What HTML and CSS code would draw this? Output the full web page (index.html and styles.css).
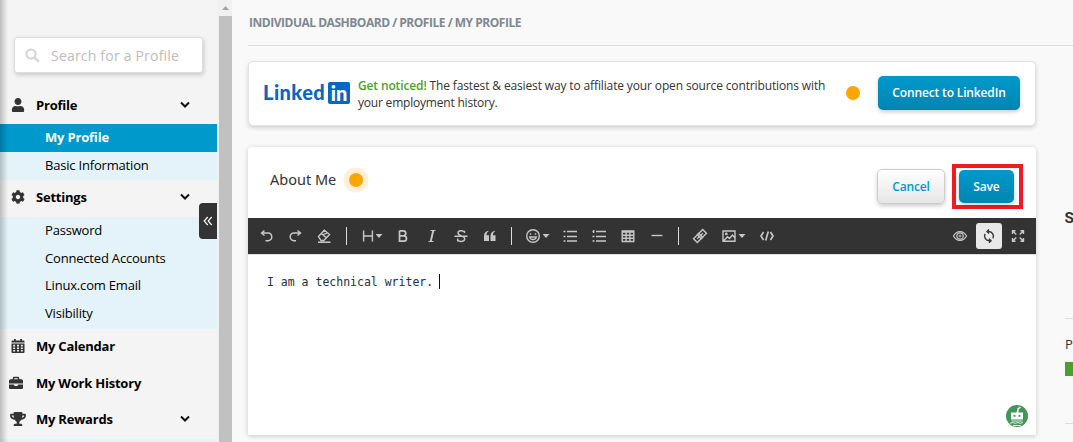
FILE: index.html
```html
<!DOCTYPE html>
<html lang="en">
<head>
<meta charset="utf-8">
<title>My Profile</title>
<link rel="stylesheet" href="styles.css">
</head>
<body>
<div class="app">
  <aside class="sidebar">
    <label class="search">
      <svg class="search-icon" viewBox="0 0 16 16"><circle cx="6.4" cy="6.4" r="4.9" fill="none" stroke="#d6d6d6" stroke-width="2.2"/><path d="M10 10l4.6 4.6" stroke="#d6d6d6" stroke-width="2.6"/></svg>
      <span>Search for a Profile</span>
    </label>
    <nav class="nav">
      <div class="group tall"><svg class="nav-icon" viewBox="-32 0 512 512"><path d="M224 256c70.700 0 128-57.300 128-128S294.700 0 224 0 96 57.300 96 128s57.300 128 128 128zm89.600 32h-16.700c-22.200 10.200-46.900 16-72.900 16s-50.600-5.800-72.900-16h-16.700C60.200 288 0 348.200 0 422.400V464c0 26.500 21.500 48 48 48h352c26.500 0 48-21.500 48-48v-41.600c0-74.200-60.200-134.400-134.400-134.400z"/></svg><b>Profile</b><svg class="chevron" viewBox="0 0 10 8"><path d="M1 1.500l4 4 4-4"/></svg></div>
      <div class="item active">My Profile</div>
      <div class="item">Basic Information</div>
      <div class="group tall raised"><svg class="nav-icon" viewBox="0 0 512 512"><path d="M487.400 315.700l-42.600-24.600c4.300-23.200 4.300-47 0-70.200l42.600-24.600c4.900-2.800 7.100-8.600 5.500-14-11.100-35.600-30-67.800-54.700-94.600-3.800-4.100-10-5.100-14.800-2.300L380.800 110c-17.900-15.400-38.500-27.300-60.800-35.100V25.800c0-5.600-3.900-10.500-9.400-11.700-36.700-8.200-74.300-7.800-109.200 0-5.500 1.200-9.400 6.100-9.400 11.700V75c-22.200 7.900-42.800 19.800-60.800 35.100L88.700 85.500c-4.900-2.800-11-1.900-14.800 2.300-24.700 26.700-43.600 58.900-54.700 94.600-1.700 5.400.6 11.200 5.500 14L67.300 221c-4.300 23.200-4.300 47 0 70.200l-42.600 24.600c-4.900 2.800-7.100 8.600-5.500 14 11.100 35.600 30 67.800 54.700 94.600 3.800 4.100 10 5.100 14.800 2.300l42.600-24.600c17.900 15.400 38.500 27.300 60.800 35.100v49.200c0 5.600 3.900 10.500 9.400 11.700 36.700 8.200 74.300 7.800 109.200 0 5.500-1.200 9.400-6.100 9.400-11.700v-49.200c22.200-7.900 42.800-19.800 60.800-35.100l42.600 24.600c4.900 2.800 11 1.900 14.800-2.300 24.700-26.700 43.600-58.900 54.700-94.600 1.500-5.500-.7-11.300-5.600-14.100zM256 336c-44.100 0-80-35.900-80-80s35.900-80 80-80 80 35.900 80 80-35.900 80-80 80z"/></svg><b>Settings</b><svg class="chevron" viewBox="0 0 10 8"><path d="M1 1.500l4 4 4-4"/></svg></div>
      <div class="item">Password</div>
      <div class="item">Connected Accounts</div>
      <div class="item tight">Linux.com Email</div>
      <div class="item tight">Visibility</div>
      <div class="group raised"><svg class="nav-icon" viewBox="0 0 14 14"><path fill-rule="evenodd" d="M.5 3.400V2.500q0-1 1-1H3V0h1.800v1.500h4.400V0H11v1.500h1.500q1 0 1 1v.9zM.5 4.400h13V13q0 1-1 1h-11q-1 0-1-1zM2.200 5.800v1.600h1.900V5.800zm3.800 0v1.600h2V5.800zm3.900 0v1.600h1.900V5.800zM2.200 8.500v1.500h1.900V8.500zm3.800 0v1.500h2V8.500zm3.900 0v1.500h1.900V8.500zM2.200 11.100v1.500h1.900v-1.500zm3.800 0v1.500h2v-1.500zm3.900 0v1.500h1.900v-1.500z"/></svg><b>My Calendar</b></div>
      <div class="group raised"><svg class="nav-icon briefcase" viewBox="0 0 14 14"><path fill-rule="evenodd" d="M3.700 3.200V2.100Q3.700.8 5 .8h4q1.300 0 1.300 1.300v1.100h2.200Q14 3.200 14 4.700v2.900H0V4.700q0-1.500 1.500-1.500zm1.500 0h3.600v-.9H5.200zM0 8.500h5.200v.8q0 .6.600.6h2.400q.6 0 .6-.6v-.8H14v3.200q0 1.300-1.300 1.300H1.300Q0 13 0 11.700z"/></svg><b>My Work History</b></div>
      <div class="group raised last"><svg class="nav-icon trophy" viewBox="0 0 576 512"><path d="M552 64H448V24c0-13.300-10.700-24-24-24H152c-13.300 0-24 10.700-24 24v40H24C10.700 64 0 74.700 0 88v56c0 35.700 22.500 72.400 61.900 100.700 31.500 22.700 69.800 37.100 110 41.700C203.300 338.500 240 360 240 360v72h-48c-35.300 0-64 20.700-64 56v12c0 6.600 5.400 12 12 12h296c6.600 0 12-5.400 12-12v-12c0-35.300-28.700-56-64-56h-48v-72s36.700-21.500 68.100-73.600c40.300-4.600 78.600-19 110-41.700 39.300-28.300 61.900-65 61.900-100.700V88c0-13.300-10.700-24-24-24zM99.300 192.800C74.900 175.200 64 155.600 64 144v-16h64.200c1 32.600 5.800 61.200 12.800 86.200-15.100-5.200-29.200-12.400-41.700-21.400zM512 144c0 16.100-17.700 36.100-35.300 48.800-12.500 9-26.700 16.200-41.800 21.400 7-25 11.800-53.600 12.800-86.200H512v16z"/></svg><b>My Rewards</b><svg class="chevron" viewBox="0 0 10 8"><path d="M1 1.500l4 4 4-4"/></svg></div>
      <div class="item"></div>
    </nav>
    <div class="collapse"><svg viewBox="0 0 10 10"><path d="M4.700 1L1.200 5l3.500 4M8.700 1L5.200 5l3.500 4"/></svg></div>
  </aside>
  <div class="scrollbar"><i></i></div>
  <div class="page">
  <header class="crumbs">INDIVIDUAL DASHBOARD / PROFILE / MY PROFILE</header>
  <div class="columns">
  <main class="main">
    <section class="promo">
      <div class="linkedin"><span>Linked</span><b>in</b></div>
      <p class="notice"><em>Get noticed!</em> The fastest &amp; easiest way to affiliate your open source contributions with<br><span class="line2">your employment history.</span></p>
      <i class="dot"></i>
      <button class="btn connect">Connect to LinkedIn</button>
    </section>
    <section class="about">
      <div class="about-head">
        <h2>About Me</h2><i class="dot halo"></i>
        <button class="btn cancel">Cancel</button>
        <div class="highlight"><button class="btn save">Save</button></div>
      </div>
      <div class="toolbar">
        <span class="tool first"><svg viewBox="0 0 16 16"><path d="M5.500 2.500L2.500 5l3 2.500M3 5h6.500a3.900 3.900 0 010 7.700H6.500"/></svg></span>
        <span class="tool first"><svg viewBox="0 0 16 16"><path d="M10.500 2.500l3 2.500-3 2.500M13 5H6.500a3.900 3.900 0 000 7.700H9"/></svg></span>
        <span class="tool first"><svg viewBox="0 0 16 16"><path d="M2.500 8.500l5.800-6.200 5.200 4.200-5.700 6H5zM5.300 5.500l5.300 4.500M7.300 6.300l3.500-1M2 14.300h12.500"/></svg></span>
        <span class="sep wide"></span>
        <span class="tool heading"><svg viewBox="0 0 16 16"><path d="M3.600 2.500v11M12.400 2.500v11M3.600 8h8.800"/></svg><i class="caret"></i></span>
        <span class="tool"><svg viewBox="0 0 16 16"><path stroke-width="1.700" d="M4.500 2.800v10.400h4.300a2.700 2.700 0 000-5.400H4.500M4.500 2.800h3.800a2.500 2.500 0 010 5"/></svg></span>
        <span class="tool"><svg viewBox="0 0 16 16"><path stroke-width="1.100" d="M6.500 2.500h5M4.500 13.500h5"/><path stroke-width="1.900" d="M9.300 2.500l-2.600 11"/></svg></span>
        <span class="tool"><svg viewBox="0 0 16 16"><path d="M11.500 5V2.700M11.500 4C9.500 2 5 2.300 5 5c0 3.300 6.700 2.300 6.700 5.700 0 3.200-5 3.500-7 1.300m0-1.500v3M1.500 8.300h13"/></svg></span>
        <span class="tool"><svg class="solid" viewBox="0 0 16 16"><path d="M6.700 3.200C5 4 4.500 5.100 4.500 7.300H7V13H2V8C2 5 3.600 3.300 6.200 2.700zM13.200 3.200c-1.700.8-2.200 1.900-2.200 4.100h2.500V13h-5V8c0-3 1.600-4.700 4.200-5.300z"/></svg></span>
        <span class="sep"></span>
        <span class="tool emoji"><svg viewBox="0 0 16 16"><circle cx="8" cy="8" r="6.300"/><path d="M5.500 5.200v1.600M10.500 5.200v1.600M4.700 9h6.600c-.4 3.300-6.200 3.300-6.600 0z"/></svg><i class="caret"></i></span>
        <span class="tool"><svg viewBox="0 0 16 16"><path d="M1.500 3.500h2M5 3.500h10M1.500 8.500h2M5 8.500h10M1.500 13h2M5 13h10"/></svg></span>
        <span class="tool"><svg viewBox="0 0 16 16"><path d="M1.500 3.500h1.200M5 3.500h10M1.500 8.500h2M5 8.500h10M1.500 13h2M5 13h10M2.700 2v3"/></svg></span>
        <span class="tool"><svg viewBox="0 0 16 16"><path d="M2.200 3h11.600v10.500H2.200zM2 4h12M2 7.200h12M2 10.300h12M6.100 4v9.500M9.900 4v9.500"/></svg></span>
        <span class="tool"><svg viewBox="0 0 16 16"><path d="M2.500 7.500h11"/></svg></span>
        <span class="sep"></span>
        <span class="tool link"><svg viewBox="0 0 16 16"><g transform="rotate(-45 8 8)"><rect x="1.500" y="5.300" width="7.500" height="5.400"/><rect x="7" y="5.300" width="7.500" height="5.400"/><path d="M4 8h8"/></g></svg></span>
        <span class="tool picture"><svg viewBox="0 0 16 16"><path d="M2 3h12v10.200H2zM3 12.500l3.500-3.700 2 1.700 3-3.500 2.500 3"/><circle cx="5.300" cy="5.900" r=".7"/></svg><i class="caret"></i></span>
        <span class="tool"><svg viewBox="0 0 16 16"><path stroke-width="1.700" d="M4.500 4L2 8l2.500 4M11.500 4L14 8l-2.500 4M9.300 3.500l-2.600 9"/></svg></span>
        <span class="spacer"></span>
        <span class="tool"><svg viewBox="0 0 16 16"><path stroke-width="1.200" d="M1.500 8c3-5.800 10-5.800 13 0-3 5.800-10 5.800-13 0z"/><circle cx="8" cy="8" r="3.200" stroke-width="1.200"/><circle cx="8" cy="8" r="1" stroke-width="1"/></svg></span>
        <span class="tool sync"><svg viewBox="0 0 16 16"><path d="M7 3.500h.8a4.700 4.700 0 014.100 6.900M9 12.700h-.8A4.700 4.700 0 014.100 5.800M8 1.500L6 3.500l2 2M8 10.700l2 2-2 2"/></svg></span>
        <span class="tool"><svg viewBox="0 0 16 16"><path d="M2.500 6V2.700h3M10.500 2.700h3V6M13.500 10v3.300h-3M5.500 13.300h-3V10M3 3.200l3.300 3.300M13 3.200L9.700 6.500M13 12.800L9.700 9.500M3 12.800l3.300-3.300"/></svg></span>
      </div>
      <div class="editor"><code>I am a technical writer.</code><i class="cursor"></i>
        <svg class="robot" viewBox="0 0 22 22"><circle cx="11" cy="11" r="11" fill="#43955a"/><path d="M10.500 7.500l1-4 2.500-2 .8 1.200-2 1.500-.5 3.300zM5 7.500h12v7H5z" fill="#fff"/><path d="M7.500 10h2v1.700h-2zM12.500 10h2v1.700h-2z" fill="#43955a"/><path d="M5.500 16h11M4 18.300l3-.8 2 .8 3-.8 2 .8 3-.8M7 20.500h8" stroke="#dcecdf" fill="none"/></svg>
      </div>
    </section>
  </main>
  <aside class="stats"><h3>S</h3><div class="metric"><span>P</span><i></i></div></aside>
  </div>
  </div>
</div>
</body>
</html>
```
FILE: styles.css
```css
* { box-sizing: border-box; }
body { margin: 0; overflow: hidden; background: #f9f9f9; font-family: "Open Sans", sans-serif; font-size: 13px; color: #333; }
.app { display: flex; height: 442px; overflow: hidden; }
.sidebar { position: relative; flex: 0 0 219px; padding-top: 37px; background: #f4f4f4; border-right: 2px solid #f1f1f1; }
.sidebar::after { content: ""; position: absolute; inset: 0 auto 0 0; width: 8px; background: linear-gradient(90deg, rgba(0,0,0,.22), rgba(0,0,0,0)); }
.search { display: flex; align-items: center; gap: 11px; width: 189px; height: 36px; margin-left: 14px; padding-left: 10px; background: #fff; border: 1px solid #ddd; border-radius: 3px; box-shadow: 1px 2px 4px rgba(0,0,0,.18); color: #bdbdbd; font-size: 14px; letter-spacing: .2px; }
.search-icon { width: 15px; height: 15px; }
.nav { padding-top: 14px; color: #000; }
.group { display: flex; align-items: center; height: 36.67px; padding: 0 27px 0 11px; }
.group.tall { height: 37px; padding-bottom: 2px; }
.group.raised { padding-bottom: 2px; }
.group.tall.raised, .group.last { padding-bottom: 3px; }
.group b { margin-left: 11px; font-weight: 700; letter-spacing: -.22px; }
.nav-icon { width: 14px; height: 14px; fill: #333; flex: none; }
.briefcase { margin-left: -2px; margin-right: 2px; }
.trophy { width: 16px; margin: 0 -1px; }
.chevron { width: 10px; height: 8px; margin-left: auto; fill: none; stroke: #111; stroke-width: 2; }
.item { height: 28px; padding-left: 45px; line-height: 27px; background: #e3f3f9; white-space: nowrap; letter-spacing: -.19px; }
.item.tight { line-height: 25px; }
.item.active { background: #0099cc; color: #fff; font-weight: 700; }
.collapse { position: absolute; top: 203px; right: 0; z-index: 2; display: grid; place-items: center; width: 18px; height: 36px; background: #333; border-radius: 4px 0 0 4px; }
.collapse svg { width: 10px; height: 10px; fill: none; stroke: #fff; stroke-width: 1.2; }
.scrollbar { flex: 0 0 13px; background: #c1c1c1; border-top: 16px solid #f1f1f1; }
.scrollbar i { display: block; width: 7px; height: 4px; margin: -10px auto 0; background: #a3a3a3; clip-path: polygon(50% 0, 100% 100%, 0 100%); }
.page { flex: 1; min-width: 0; margin-left: 16px; }
.columns { display: flex; }
.main { flex: 0 0 788px; }
.crumbs { height: 46px; padding: 14px 0 0 1px; border-bottom: 1px solid #ddd; color: #808890; font-size: 12px; font-weight: 700; line-height: 18px; letter-spacing: -.48px; white-space: nowrap; }
.promo { display: flex; align-items: center; width: 788px; height: 65px; margin-top: 15px; padding: 0 15px; background: #fff; border: 1px solid #e2e2e2; border-radius: 5px; box-shadow: 0 2px 4px rgba(0,0,0,.16); }
.linkedin { display: flex; align-items: center; width: 94px; color: #0a66c2; font: 900 20px/22px Lato, sans-serif; }
.linkedin span { width: 63px; letter-spacing: .45px; margin: -3px 0 0 -1px; }
.linkedin b { display: block; width: 22px; height: 22px; margin: -2px 0 0 2px; border-radius: 2px; background: #0a66c2; color: #fff; text-align: center; font-weight: 900; }
.notice { margin: 0; width: 488px; font-size: 12px; line-height: 17px; white-space: nowrap; letter-spacing: -.135px; }
.notice em { color: #4a9f2e; font-style: normal; font-weight: 600; }
.line2 { letter-spacing: -.2px; }
.dot { flex: none; width: 14px; height: 14px; margin-top: -2px; border-radius: 50%; background: #ffa500; }
.btn { display: flex; align-items: center; justify-content: center; padding: 0; border: 0; border-radius: 5px; font: 600 12px "Open Sans", sans-serif; letter-spacing: -.15px; white-space: nowrap; box-shadow: 0 2px 4px rgba(0,0,0,.2); }
.connect, .save { background: linear-gradient(#0099cc, #0085b2); color: #fff; }
.connect { width: 142px; height: 34px; margin: -2px 0 0 auto; }
.about { width: 788px; height: 288px; margin-top: 21px; background: #fff; border-radius: 4px 4px 0 0; box-shadow: 0 1px 5px rgba(0,0,0,.2); }
.about-head { display: flex; align-items: center; height: 71px; padding: 0 13px 0 22px; }
.about-head h2 { width: 67px; margin: 0 12px 7px 0; font: 400 14.500px/20px "Noto Sans", sans-serif; white-space: nowrap; }
.halo { margin: 0 0 6px; box-shadow: 0 0 0 5.500px #ffefd6; }
.cancel { width: 68px; height: 35px; margin-top: 7px; margin-left: auto; border: 1px solid #ccc; background: linear-gradient(#fff, #e6e6e6); color: #0099cc; }
.highlight { display: flex; align-items: center; width: 71px; height: 45px; margin: 7px 0 0 7px; padding-left: 3px; border: 4px solid #ed1c24; }
.save { width: 55px; height: 33px; }
.toolbar { display: flex; align-items: center; height: 37px; padding: 0 4px 0 4.500px; background: #333; border-bottom: 1px solid #ddd; }
.tool { flex: 0 0 29px; display: flex; align-items: center; justify-content: center; height: 26px; }
.tool.first { flex-basis: 28.500px; }
.tool svg { flex: none; width: 16px; height: 16px; fill: none; stroke: #c7c7c7; stroke-width: 1.400; }
.tool svg.solid { fill: #c7c7c7; stroke: none; }
.sep { flex: 0 0 14.500px; height: 18px; background: linear-gradient(#ddd, #ddd) center / 1px 100% no-repeat; }
.sep.wide { flex-basis: 16px; }
.heading { flex-basis: 34px; }
.emoji { flex-basis: 37px; }
.tool.link { flex-basis: 28px; }
.picture { flex-basis: 38px; }
.caret { width: 7px; height: 4px; margin-left: 2px; background: #c7c7c7; clip-path: polygon(0 0, 100% 0, 50% 100%); }
.heading .caret { margin-left: 0; }
.spacer { flex: 1; }
.sync { flex-basis: 26px; margin: 0 1.500px; background: #e8e8e8; border-radius: 3px; }
.tool.sync svg { stroke: #333; }
.editor { display: flex; position: relative; height: 180px; padding: 18px 0 0 19px; color: #222f3e; }
.editor code { font: 11.500px/18px "DejaVu Sans Mono", monospace; }
.cursor { width: 1px; height: 15px; margin: 1px 0 0 6px; background: #111; }
.robot { position: absolute; right: 8px; bottom: 8px; width: 22px; height: 22px; }
.stats { flex: 0 0 60px; margin-left: 29px; padding-top: 159px; }
.stats h3 { height: 113px; margin: 0 0 0 -.5px; font: 700 15.500px/26px Roboto, sans-serif; }
.metric { height: 106px; padding-top: 15px; border-top: 1px solid #ddd; border-bottom: 1px solid #ddd; font-size: 13px; font-weight: 500; line-height: 20px; }
.metric i { display: block; height: 14px; margin-top: 8px; background: #4a9f2e; }
```
